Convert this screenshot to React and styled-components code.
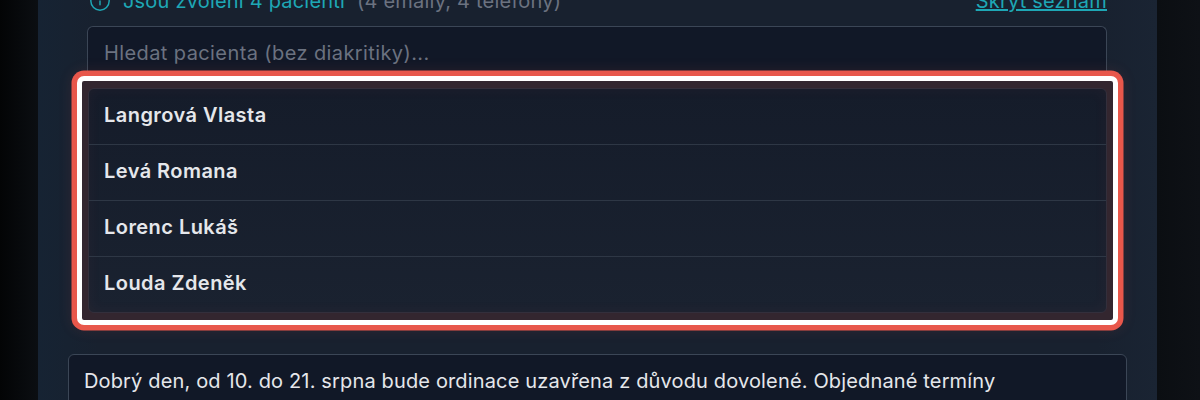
import React from 'react';
import styled, { createGlobalStyle } from 'styled-components';
import { Info } from 'lucide-react';

const GlobalStyle = createGlobalStyle`
  html, body {
    margin: 0;
    padding: 0;
    background: #0b0d11;
  }
  body {
    font-family: "Inter", "Noto Sans", sans-serif;
  }
`;

const Page = styled.div`
  width: 1200px;
  height: 400px;
  overflow: hidden;
  background: linear-gradient(90deg, #030405 0, #0b0e12 38px, #0b0e12 1157px, #0e1116 1200px);
`;

const Modal = styled.div`
  width: 1119px;
  margin: -14px 0 0 38px;
  padding: 0 30px;
  box-sizing: border-box;
  height: 420px;
  background: linear-gradient(90deg, #162333 0, #18212f 60px, #18212f 1060px, #1a2433 100%);
`;

const Section = styled.div`
  padding: 0 20px 0 19px;
`;

const StatusRow = styled.div`
  display: flex;
  align-items: center;
  height: 30px;
  font-size: 20px;
  letter-spacing: 0.2px;
`;

const StatusIcon = styled(Info)`
  width: 22px;
  height: 22px;
  stroke-width: 1.6;
  color: #1ea7b5;
  margin: 0 12px 0 2px;
`;

const StatusText = styled.span`
  color: #1ea7b5;
`;

const StatusMeta = styled.span`
  color: #6b7280;
  margin-left: 12px;
`;

const ToggleLink = styled.a`
  margin-left: auto;
  color: #1ea7b5;
  text-decoration: underline;
`;

const SearchBox = styled.div`
  height: 54px;
  margin-top: 10px;
  padding: 0 16px 2px;
  display: flex;
  align-items: center;
  box-sizing: border-box;
  border: 1px solid #3b4656;
  border-bottom: 0;
  border-radius: 6px 6px 0 0;
  background: #111827;
  color: #6b7280;
  font-size: 20px;
  letter-spacing: 0.4px;
`;

const ListWrap = styled.div`
  position: relative;
  margin: 8px 0 0 1px;
`;

const PatientList = styled.ul`
  position: relative;
  z-index: 1;
  list-style: none;
  margin: 0;
  padding: 0;
  height: 225px;
  box-sizing: border-box;
  background: linear-gradient(180deg, #151c2a, #1a2230);
  border: 1px solid #332f3c;
  border-radius: 6px;
  box-shadow: inset 0 0 14px rgba(232, 87, 75, 0.05);
`;

const PatientRow = styled.li`
  height: 56px;
  box-sizing: border-box;
  padding: 0 15px 4px;
  display: flex;
  align-items: center;
  color: #e5e7eb;
  font-size: 20px;
  font-weight: 600;
  letter-spacing: 0.45px;
  border-bottom: ${({ last }) => (last ? '0' : '1px solid #2e3745')};
`;

const Highlight = styled.div`
  position: absolute;
  inset: -12px -11px;
  box-sizing: border-box;
  border: 5px solid #fff;
  border-radius: 7px;
  background: #33262f;
  box-shadow: 0 0 0 5.5px #e8574b, 0 0 14px 6px rgba(232, 87, 75, 0.1);
  pointer-events: none;
`;

const MessageBox = styled.div`
  margin-top: 41px;
  height: 80px;
  padding: 14px 15px;
  box-sizing: border-box;
  border: 1px solid #3b4656;
  border-radius: 6px;
  background: #111827;
  color: #e5e7eb;
  font-size: 20px;
  line-height: 24px;
  letter-spacing: 0.15px;
  white-space: nowrap;
`;

const patients = ['Langrová Vlasta', 'Levá Romana', 'Lorenc Lukáš', 'Louda Zdeněk'];

const App = () => (
  <Page>
    <GlobalStyle />
    <Modal>
      <Section>
        <StatusRow>
          <StatusIcon />
          <StatusText>Jsou zvolení 4 pacienti</StatusText>
          <StatusMeta>(4 emaily, 4 telefony)</StatusMeta>
          <ToggleLink>Skrýt seznam</ToggleLink>
        </StatusRow>
        <SearchBox>Hledat pacienta (bez diakritiky)...</SearchBox>
        <ListWrap>
          <PatientList>
            {patients.map((name, i) => (
              <PatientRow key={name} last={i === patients.length - 1}>{name}</PatientRow>
            ))}
          </PatientList>
          <Highlight />
        </ListWrap>
      </Section>
      <MessageBox>
        Dobrý den, od 10. do 21. srpna bude ordinace uzavřena z důvodu dovolené. Objednané termíny
      </MessageBox>
    </Modal>
  </Page>
);

export default App;
